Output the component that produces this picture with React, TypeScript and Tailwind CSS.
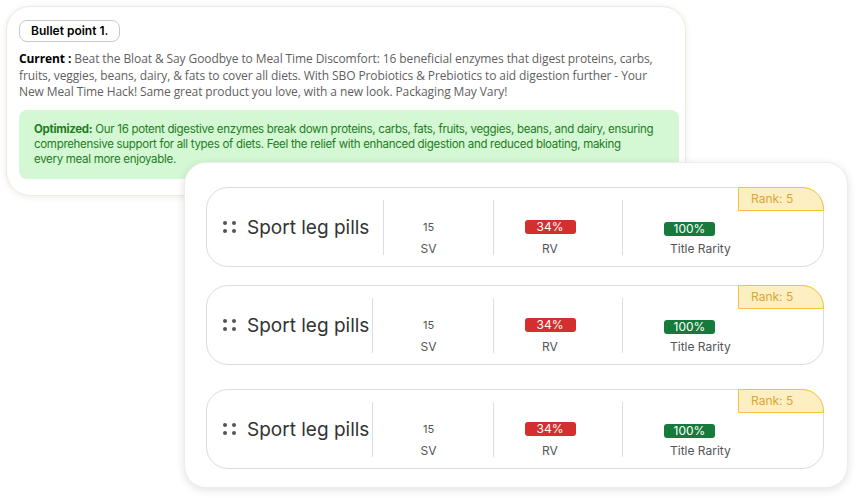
import React from "react";

const rows = [
  { firstW: "w-[176px]", svPad: "pr-[20px]", mt: "mt-[23px]" },
  { firstW: "w-[165px]", svPad: "pr-[9px]", mt: "mt-[18px]" },
  { firstW: "w-[165px]", svPad: "pr-[9px]", mt: "mt-[24px]" },
];

const Dots = () => (
  <div className="grid grid-cols-2 gap-x-[5px] gap-y-[4px]">
    <span className="w-[4px] h-[4px] rounded-full bg-[#555]" />
    <span className="w-[4px] h-[4px] rounded-full bg-[#555]" />
    <span className="w-[4px] h-[4px] rounded-full bg-[#555]" />
    <span className="w-[4px] h-[4px] rounded-full bg-[#555]" />
  </div>
);

const KeywordRow = ({ firstW, svPad, mt }: { firstW: string; svPad: string; mt: string }) => {
  return (
    <div className={`relative ${mt} w-[618px] h-[80px] rounded-[22px] border border-[#dcdcdc] bg-white flex items-start`}>
      {/* name */}
      <div className={`${firstW} h-full flex items-center pl-[16px] gap-[11px]`}>
        <Dots />
        <span className="text-[19px] text-[#333] leading-none">Sport leg pills</span>
      </div>
      <div className="w-px h-[55px] mt-[12px] bg-[#dddddd]" />
      {/* SV */}
      <div className={`flex-1 flex flex-col items-center pt-[32px] ${svPad}`}>
        <span className="text-[11px] leading-[14px] text-[#555]">15</span>
        <span className="mt-[8px] text-[12px] leading-[14px] text-[#555]">SV</span>
      </div>
      <div className="w-px h-[55px] mt-[12px] bg-[#dddddd]" />
      {/* RV */}
      <div className="w-[128px] flex flex-col items-center pt-[32px] pr-[16px]">
        <span className="w-[51px] h-[14px] rounded-[3px] bg-[#d32f2f] text-white text-[12px] leading-[14px] text-center">34%</span>
        <span className="mt-[8px] text-[12px] leading-[14px] text-[#555]">RV</span>
      </div>
      <div className="w-px h-[55px] mt-[12px] bg-[#dddddd]" />
      {/* Title rarity */}
      <div className="w-[200px] flex flex-col items-start pt-[34px]">
        <span className="ml-[41px] w-[51px] h-[14px] rounded-[3px] bg-[#157a3b] text-white text-[12px] leading-[14px] text-center">100%</span>
        <span className="ml-[47px] mt-[6px] text-[12px] leading-[14px] text-[#555]">Title Rarity</span>
      </div>
      {/* rank */}
      <div className="absolute -top-px -right-px w-[86px] h-[24px] rounded-tr-[22px] border border-[#f4c23c] bg-[#fdefc2] pl-[12px] text-[12px] leading-[22px] text-[#d9a636]">
        Rank: 5
      </div>
    </div>
  );
};

export default function App() {
  return (
    <div className="w-[858px] h-[498px] bg-white overflow-hidden font-['Inter',sans-serif]">
      {/* bullet card */}
      <div className="relative ml-[6px] pt-[6px]">
        <div className="w-[680px] h-[190px] rounded-[24px] border border-[#f1e9e0] bg-white shadow-[0_1px_6px_rgba(180,160,130,0.2)] px-[12px] pt-[10px]">
          <div className="inline-block rounded-[8px] border border-[#c9c9c9] px-[11px] h-[22px] text-[12px] leading-[20px] font-semibold text-black">
            Bullet point 1.
          </div>
          <p className="mt-[9px] w-[650px] text-[12px] leading-[16.5px] text-[#5f5f5f] font-['Open_Sans',sans-serif] tracking-[-0.1px]">
            <span className="font-bold text-black">Current :</span> Beat the Bloat &amp; Say Goodbye to Meal Time Discomfort: 16 beneficial enzymes that digest proteins, carbs, fruits, veggies, beans, dairy, &amp; fats to cover all diets. With SBO Probiotics &amp; Prebiotics to aid digestion further - Your New Meal Time Hack! Same great product you love, with a new look. Packaging May Vary!
          </p>
          <div className="mt-[9px] w-[660px] h-[69px] rounded-[8px] bg-[#d4f7d4] px-[15px] pt-[12px] text-[11.5px] leading-[15px] tracking-[-0.3px] text-[#1e7d1e]">
            <span className="font-bold">Optimized:</span> Our 16 potent digestive enzymes break down proteins, carbs, fats, fruits, veggies, beans, and dairy, ensuring comprehensive support for all types of diets. Feel the relief with enhanced digestion and reduced bloating, making
            <br />
            every meal more enjoyable.
          </div>
        </div>
      </div>
      {/* keyword card */}
      <div className="relative z-10 ml-[184px] -mt-[34px] w-[664px] h-[326px] rounded-[22px] border border-[#ececec] bg-white shadow-[0_2px_8px_rgba(0,0,0,0.12)] pl-[21px] pt-px">
        {rows.map((r, i) => (
          <KeywordRow key={i} {...r} />
        ))}
      </div>
    </div>
  );
}
